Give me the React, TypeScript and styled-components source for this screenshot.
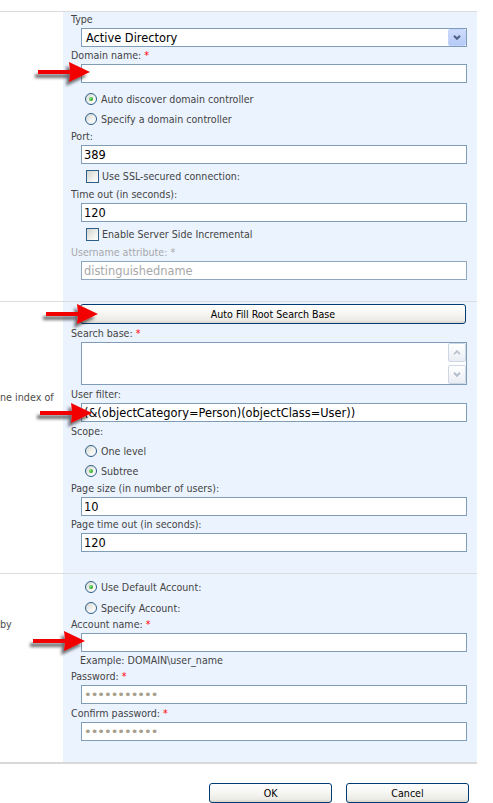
import React from "react";
import styled, { createGlobalStyle } from "styled-components";

const Global = createGlobalStyle`
  html, body { margin: 0; padding: 0; background: #ffffff; }
  body {
    font-family: "DejaVu Sans Condensed", "DejaVu Sans", "Liberation Sans", sans-serif;
    font-size: 10.5px;
  }
  * { box-sizing: border-box; }
`;

const UI_FONT = `"DejaVu Sans Condensed", "DejaVu Sans", "Liberation Sans", sans-serif`;
const FIELD_FONT = `"DejaVu Sans", "Liberation Sans", sans-serif`;

const Page = styled.div`
  position: relative;
  width: 493px;
  height: 803px;
  overflow: hidden;
  padding-top: 11px;
`;

const Form = styled.div`
  width: 477px;
`;

const Section = styled.div`
  display: grid;
  grid-template-columns: 63px 414px;
  border-top: 1px solid #dcdcdc;
`;

const Desc = styled.div<{ $top: number }>`
  padding-top: ${(p) => p.$top}px;
  color: #4c4c4c;
  line-height: 16px;
  font-size: 10.7px;
  white-space: nowrap;
  overflow: hidden;
  font-family: ${UI_FONT};
`;

const Panel = styled.div<{ $pb: number }>`
  background: #ebf3ff;
  padding: 0 10px ${(p) => p.$pb}px 8px;
  display: flex;
  flex-direction: column;
`;

const Label = styled.div<{ $disabled?: boolean; $mt?: number }>`
  line-height: 17px;
  margin-top: ${(p) => p.$mt ?? 0}px;
  color: ${(p) => (p.$disabled ? "#a8a8a8" : "#444444")};
  font-family: ${UI_FONT};
  font-size: 10.6px;
  white-space: nowrap;
`;

const Req = styled.span<{ $disabled?: boolean }>`
  color: ${(p) => (p.$disabled ? "#a8a8a8" : "#ff0000")};
`;

const Hint = styled.div`
  line-height: 16px;
  margin-left: 9px;
  color: #444444;
  font-size: 10.6px;
  font-family: ${UI_FONT};
`;

const TextInput = styled.input<{ $muted?: boolean }>`
  display: block;
  margin: 0 0 0 10px;
  width: 386px;
  height: 19px;
  border: 1px solid #7f9db9;
  background: #ffffff;
  padding: 0 2px;
  font-family: ${FIELD_FONT};
  font-size: ${(p) => (p.$muted ? "13px" : "11.4px")};
  color: ${(p) => (p.$muted ? "#a6a08c" : "#000000")};
  letter-spacing: ${(p) => (p.$muted ? "-1px" : "0")};
  outline: none;
  &:disabled {
    color: #a8a8a8;
    background: #ffffff;
    border-color: #8fa8c0;
  }
`;

const SelectBox = styled.div`
  display: flex;
  align-items: center;
  justify-content: space-between;
  margin-left: 10px;
  width: 386px;
  height: 19px;
  border: 1px solid #7f9db9;
  background: #ffffff;
  padding: 0 0 0 4px;
  font-family: ${FIELD_FONT};
  font-size: 11.4px;
  color: #000000;
`;

const DropButton = styled.span`
  display: flex;
  align-items: center;
  justify-content: center;
  width: 18px;
  height: 17px;
  border: 1px solid #c3d3fb;
  border-radius: 2px;
  background: linear-gradient(#cddcfd, #b6caf6);
`;

const AreaBox = styled.div`
  display: flex;
  justify-content: flex-end;
  margin-left: 10px;
  width: 386px;
  height: 43px;
  border: 1px solid #7f9db9;
  background: #ffffff;
`;

const ScrollColumn = styled.div`
  display: flex;
  flex-direction: column;
  justify-content: space-between;
  width: 18px;
`;

const ScrollButton = styled.span`
  display: flex;
  align-items: center;
  justify-content: center;
  width: 18px;
  height: 19px;
  border: 1px solid #cdd6e4;
  border-radius: 2px;
  background: linear-gradient(#ffffff, #e9edf3);
`;

const OptionRow = styled.div<{ $mt?: number }>`
  display: flex;
  align-items: center;
  gap: 4px;
  height: 18px;
  margin: ${(p) => p.$mt ?? 0}px 0 0 14px;
  color: #444444;
  font-family: ${UI_FONT};
  font-size: 10.6px;
  white-space: nowrap;
`;

const RadioMark = styled.span<{ $checked?: boolean }>`
  position: relative;
  flex: none;
  width: 12px;
  height: 12px;
  border: 1px solid #2c5f8a;
  border-radius: 50%;
  background: linear-gradient(135deg, #d6d6d0 0%, #f4f4f2 60%, #ffffff 100%);
  &::after {
    content: "";
    display: ${(p) => (p.$checked ? "block" : "none")};
    position: absolute;
    left: 3px;
    top: 3px;
    width: 4px;
    height: 4px;
    border-radius: 50%;
    background: radial-gradient(circle at 35% 35%, #8fe487, #23a51b 70%);
  }
`;

const CheckMark = styled.span`
  flex: none;
  width: 13px;
  height: 13px;
  margin-left: 1px;
  margin-right: -1px;
  border: 1px solid #2c5f8a;
  background: linear-gradient(135deg, #d3d3cd 0%, #eeeeea 55%, #ffffff 100%);
`;

const PushButton = styled.button<{ $w: number; $ml?: number; $mt?: number }>`
  display: block;
  width: ${(p) => p.$w}px;
  height: 20px;
  margin: ${(p) => p.$mt ?? 0}px 0 0 ${(p) => p.$ml ?? 0}px;
  padding: 0;
  border: 1px solid #003c74;
  border-radius: 3px;
  background: linear-gradient(#ffffff 0%, #f6f6f3 45%, #ecebe6 85%, #d8d4ca 100%);
  font-family: ${UI_FONT};
  font-size: 10.6px;
  color: #000000;
  line-height: 17px;
`;

const Footer = styled.div`
  width: 477px;
  border-top: 2px solid #d9d9d9;
  padding: 19px 8px 0 0;
  display: flex;
  justify-content: flex-end;
  gap: 14px;
`;

const ArrowSvg = styled.svg<{ $x: number; $y: number }>`
  position: absolute;
  left: ${(p) => p.$x - 52}px;
  top: ${(p) => p.$y - 10}px;
  overflow: visible;
  pointer-events: none;
`;

function Arrow({ x, y, id }: { x: number; y: number; id: string }) {
  return (
    <ArrowSvg $x={x} $y={y} width={52} height={20} viewBox="0 0 52 20">
      <defs>
        <filter id={id} x="-40%" y="-60%" width="180%" height="240%">
          <feDropShadow dx="-3" dy="4" stdDeviation="1.8" floodColor="#000" floodOpacity="0.55" />
        </filter>
      </defs>
      <polygon
        points="0,8 32,8 31,0 52,10 31,20 32,12 0,12"
        fill="#f20000"
        filter={`url(#${id})`}
      />
    </ArrowSvg>
  );
}

function Chevron({ color }: { color: string }) {
  return (
    <svg width={8} height={5} viewBox="0 0 8 5">
      <path d="M1 0.8 L4 3.8 L7 0.8" fill="none" stroke={color} strokeWidth={2} />
    </svg>
  );
}

function ChevronUp({ color }: { color: string }) {
  return (
    <svg width={8} height={5} viewBox="0 0 8 5">
      <path d="M1 4.2 L4 1.2 L7 4.2" fill="none" stroke={color} strokeWidth={1.6} />
    </svg>
  );
}

export default function App() {
  return (
    <>
      <Global />
      <Page>
        <Form>
          <Section>
            <Desc $top={0} />
            <Panel $pb={21}>
              <Label $mt={-1}>Type</Label>
              <SelectBox>
                <span>Active Directory</span>
                <DropButton>
                  <Chevron color="#4d6185" />
                </DropButton>
              </SelectBox>
              <Label>
                Domain name: <Req>*</Req>
              </Label>
              <TextInput defaultValue="" />
              <OptionRow $mt={7}>
                <RadioMark $checked />
                Auto discover domain controller
              </OptionRow>
              <OptionRow $mt={2}>
                <RadioMark />
                Specify a domain controller
              </OptionRow>
              <Label>Port:</Label>
              <TextInput defaultValue="389" />
              <OptionRow $mt={3}>
                <CheckMark />
                Use SSL-secured connection:
              </OptionRow>
              <Label $mt={1}>Time out (in seconds):</Label>
              <TextInput defaultValue="120" />
              <OptionRow $mt={3}>
                <CheckMark />
                Enable Server Side Incremental
              </OptionRow>
              <Label $mt={1} $disabled>
                Username attribute: <Req $disabled>*</Req>
              </Label>
              <TextInput defaultValue="distinguishedname" disabled />
            </Panel>
          </Section>

          <Section>
            <Desc $top={88}>ne index of</Desc>
            <Panel $pb={21}>
              <PushButton $w={386} $ml={9} $mt={2}>
                Auto Fill Root Search Base
              </PushButton>
              <Label $mt={1}>
                Search base: <Req>*</Req>
              </Label>
              <AreaBox>
                <ScrollColumn>
                  <ScrollButton>
                    <ChevronUp color="#b3bdcc" />
                  </ScrollButton>
                  <ScrollButton>
                    <Chevron color="#b3bdcc" />
                  </ScrollButton>
                </ScrollColumn>
              </AreaBox>
              <Label $mt={1}>User filter:</Label>
              <TextInput defaultValue="(&(objectCategory=Person)(objectClass=User))" />
              <Label $mt={1}>Scope:</Label>
              <OptionRow $mt={2}>
                <RadioMark />
                One level
              </OptionRow>
              <OptionRow $mt={2}>
                <RadioMark $checked />
                Subtree
              </OptionRow>
              <Label>Page size (in number of users):</Label>
              <TextInput defaultValue="10" />
              <Label>Page time out (in seconds):</Label>
              <TextInput defaultValue="120" />
            </Panel>
          </Section>

          <Section>
            <Desc $top={43}>by</Desc>
            <Panel $pb={21}>
              <OptionRow $mt={4}>
                <RadioMark $checked />
                Use Default Account:
              </OptionRow>
              <OptionRow $mt={3}>
                <RadioMark />
                Specify Account:
              </OptionRow>
              <Label $mt={-1}>
                Account name: <Req>*</Req>
              </Label>
              <TextInput defaultValue="" />
              <Hint>Example: DOMAIN\user_name</Hint>
              <Label>
                Password: <Req>*</Req>
              </Label>
              <TextInput type="password" defaultValue="12345678901" $muted />
              <Label $mt={1}>
                Confirm password: <Req>*</Req>
              </Label>
              <TextInput type="password" defaultValue="12345678901" $muted />
            </Panel>
          </Section>

          <Footer>
            <PushButton $w={123}>OK</PushButton>
            <PushButton $w={123}>Cancel</PushButton>
          </Footer>
        </Form>

        <Arrow id="a1" x={90} y={72} />
        <Arrow id="a2" x={98} y={314} />
        <Arrow id="a3" x={92} y={413} />
        <Arrow id="a4" x={85} y={641} />
      </Page>
    </>
  );
}
